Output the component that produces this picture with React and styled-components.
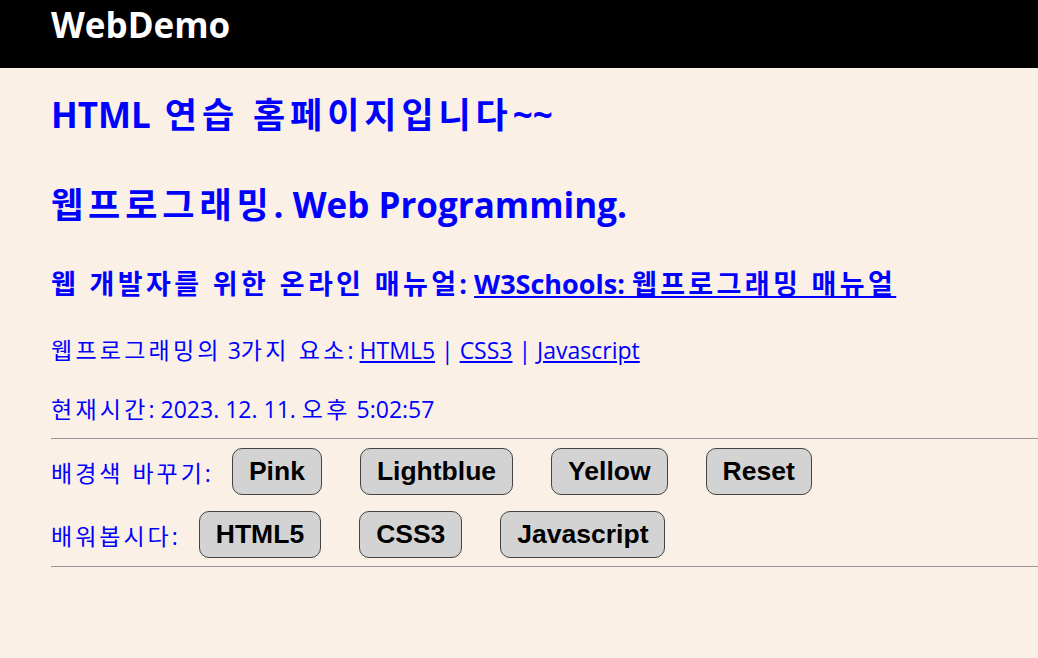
import React from 'react'
import styled, { createGlobalStyle } from 'styled-components'

const GlobalStyle = createGlobalStyle`
  html, body {
    margin: 0;
    padding: 0;
    background: #faf0e6;
  }
  body {
    font-family: 'Open Sans', 'Noto Sans CJK KR', sans-serif;
    color: #0000ff;
  }
`

const Header = styled.header`
  height: 68px;
  background: #000;
  padding: 0 51px;
  box-sizing: border-box;
`

const Logo = styled.div`
  color: #fff;
  font-size: 35px;
  font-weight: 700;
  line-height: 50px;
`

const Main = styled.main`
  display: flex;
  flex-direction: column;
  padding-left: 51px;
`

// hangul in the original font runs wider than Noto CJK, so space it out
const Ko = styled.span`
  letter-spacing: 0.14em;
`

const Title = styled.h1`
  margin: ${(p) => p.$top}px 0 0;
  font-size: 35px;
  font-weight: 700;
  line-height: 44px;
`

const SubTitle = styled.h3`
  margin: 40px 0 0;
  font-size: 27px;
  font-weight: 700;
  line-height: 34px;

  ${Ko} {
    letter-spacing: 0.125em;
  }
`

const Text = styled.p`
  margin: ${(p) => p.$top}px 0 0;
  font-size: 23px;
  line-height: 30px;
`

const Link = styled.a`
  color: #0000ff;
  text-decoration: underline;
`

const Rule = styled.hr`
  margin: ${(p) => p.$top}px 0 0;
  border: none;
  border-top: 1px solid #999;
  height: 0;
`

const ButtonRow = styled.div`
  display: flex;
  align-items: center;
  gap: 38px;
  margin-top: ${(p) => p.$top}px;
`

const Label = styled.span`
  font-size: 23px;
  letter-spacing: 0.13em;
  margin-right: -20px;
`

const Button = styled.button`
  height: 47px;
  padding: 0 16px;
  font-family: 'Liberation Sans', Arial, sans-serif;
  font-size: 26.5px;
  font-weight: 700;
  color: #000;
  background: #d3d3d3;
  border: 1px solid #444;
  border-radius: 10px;
  cursor: pointer;
`

const colors = ['Pink', 'Lightblue', 'Yellow', 'Reset']
const courses = ['HTML5', 'CSS3', 'Javascript']

const App = () => {
  return (
    <>
      <GlobalStyle />
      <Header>
        <Logo>WebDemo</Logo>
      </Header>
      <Main>
        <Title $top={25}>
          HTML<Ko> 연습 홈페이지입니다</Ko>~~
        </Title>
        <Title $top={46}>
          <Ko>웹프로그래밍</Ko>. Web Programming.
        </Title>
        <SubTitle>
          <Ko>웹 개발자를 위한 온라인 매뉴얼</Ko>:{' '}
          <Link href='#'>
            W3Schools: <Ko>웹프로그래밍 매뉴얼</Ko>
          </Link>
        </SubTitle>
        <Text $top={34}>
          <Ko>웹프로그래밍의</Ko> 3<Ko>가지 요소</Ko>: <Link href='#'>HTML5</Link> |{' '}
          <Link href='#'>CSS3</Link> | <Link href='#'>Javascript</Link>
        </Text>
        <Text $top={29}>
          <Ko>현재시간</Ko>: 2023. 12. 11. <Ko>오후</Ko> 5:02:57
        </Text>
        <Rule $top={14} />
        <ButtonRow $top={9}>
          <Label>배경색 바꾸기:</Label>
          {colors.map((c) => (
            <Button key={c}>{c}</Button>
          ))}
        </ButtonRow>
        <ButtonRow $top={16}>
          <Label>배워봅시다:</Label>
          {courses.map((c) => (
            <Button key={c}>{c}</Button>
          ))}
        </ButtonRow>
        <Rule $top={8} />
      </Main>
    </>
  )
}

export default App
